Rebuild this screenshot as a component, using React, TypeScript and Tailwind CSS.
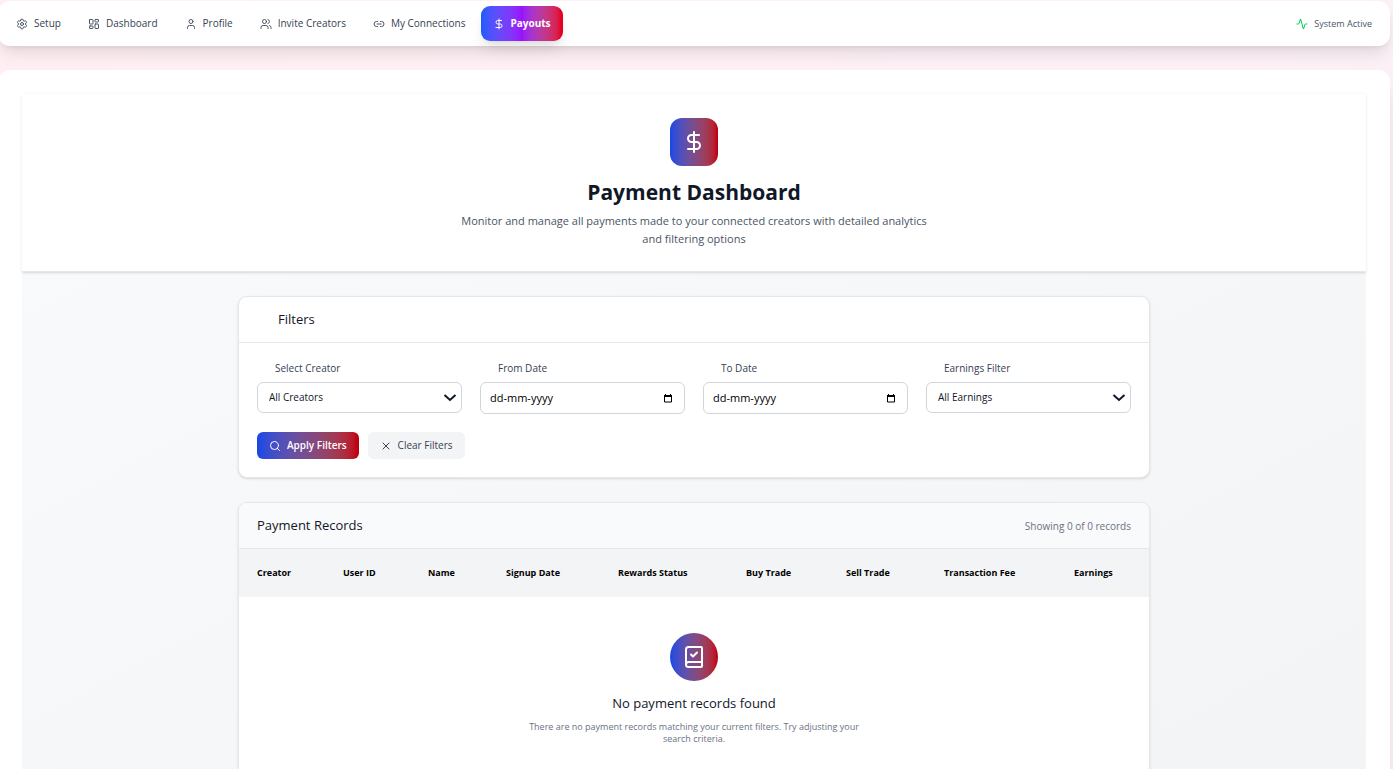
import { useState } from "react";
import {
  Activity,
  BookCheck,
  DollarSign,
  LayoutDashboard,
  Link2,
  Search,
  Settings,
  User,
  Users,
  X,
} from "lucide-react";

const navItems = [
  { label: "Setup", icon: Settings },
  { label: "Dashboard", icon: LayoutDashboard },
  { label: "Profile", icon: User },
  { label: "Invite Creators", icon: Users },
  { label: "My Connections", icon: Link2 },
  { label: "Payouts", icon: DollarSign, active: true },
];

const columns = [
  { label: "Creator", width: "w-[86px]" },
  { label: "User ID", width: "w-[85px]" },
  { label: "Name", width: "w-[78px]" },
  { label: "Signup Date", width: "w-[112px]" },
  { label: "Rewards Status", width: "w-[128px]" },
  { label: "Buy Trade", width: "w-[100px]" },
  { label: "Sell Trade", width: "w-[98px]" },
  { label: "Transaction Fee", width: "w-[130px]" },
  { label: "Earnings", width: "w-[93px]" },
];

/** Top navigation bar */
function NavBar() {
  return (
    <header className="mt-px flex items-center justify-between rounded-xl bg-white py-[5px] pr-[18px] pl-1.5 shadow-lg">
      <nav className="flex items-center gap-[3px]">
        {navItems.map(({ label, icon: Icon, active }) => (
          <a
            key={label}
            href="#"
            className={
              active
                ? "flex h-[35px] items-center gap-1.5 rounded-[9px] bg-gradient-to-r from-blue-600 via-purple-600 to-red-600 px-3 text-[10px] font-bold text-white shadow-lg"
                : "flex h-[35px] items-center gap-1.5 rounded-[9px] px-3 text-[10px] font-medium text-gray-700"
            }
          >
            <Icon size={12} className={active ? "text-white" : "text-gray-600"} />
            {label}
          </a>
        ))}
      </nav>
      <div className="flex items-center gap-1.5 text-[9px] text-gray-600">
        <Activity size={12} className="text-green-500" />
        System Active
      </div>
    </header>
  );
}

type SelectFieldProps = { id: string; label: string; options: string[] };

function SelectField({ id, label, options }: SelectFieldProps) {
  return (
    <div>
      <label
        htmlFor={id}
        className="mb-1.5 block pl-[18px] text-[10px] leading-4 font-medium text-gray-700"
      >
        {label}
      </label>
      <div className="relative">
        <select
          id={id}
          className="h-[31px] w-full appearance-none rounded-md border border-gray-300 bg-white px-[11px] text-[10px] text-gray-900"
        >
          {options.map((option) => (
            <option key={option}>{option}</option>
          ))}
        </select>
        <svg
          viewBox="0 0 14 8"
          className="pointer-events-none absolute top-3 right-[5px] h-2 w-3.5 fill-none stroke-gray-900 stroke-2"
        >
          <path d="M1.5 1 7 6l5.500-5" />
        </svg>
      </div>
    </div>
  );
}

type DateFieldProps = {
  id: string;
  label: string;
  value: string;
  onChange: (value: string) => void;
};

function DateField({ id, label, value, onChange }: DateFieldProps) {
  return (
    <div>
      <label
        htmlFor={id}
        className="mb-1.5 block pl-[18px] text-[10px] leading-4 font-medium text-gray-700"
      >
        {label}
      </label>
      <div className="flex h-8 items-center rounded-md border border-gray-300 bg-white pr-3 pl-[9px]">
        <input
          id={id}
          type="text"
          placeholder="dd-mm-yyyy"
          value={value}
          onChange={(e) => onChange(e.target.value)}
          className="min-w-0 flex-1 text-[11px] text-black outline-none placeholder:text-black"
        />
        <svg viewBox="0 0 8 9" className="h-[9px] w-2">
          <path d="M.5 2.500v5.500h7v-5.500" fill="none" stroke="#000" />
          <path d="M0 1h1V0h1v1h4V0h1v1h1v2H0z" fill="#000" />
        </svg>
      </div>
    </div>
  );
}

/** Filters card */
function Filters() {
  const [fromDate, setFromDate] = useState("");
  const [toDate, setToDate] = useState("");

  const clearFilters = () => {
    setFromDate("");
    setToDate("");
  };

  return (
    <section className="rounded-[9px] border border-gray-200 bg-white shadow-sm">
      <div className="border-b border-gray-200 px-[39px] py-3">
        <h2 className="text-[13px] leading-[21px] font-medium text-gray-900">Filters</h2>
      </div>
      <form className="p-[18px] pt-[17px]" onSubmit={(e) => e.preventDefault()}>
        <div className="grid grid-cols-4 gap-[18px]">
          <SelectField id="creator" label="Select Creator" options={["All Creators"]} />
          <DateField id="from" label="From Date" value={fromDate} onChange={setFromDate} />
          <DateField id="to" label="To Date" value={toDate} onChange={setToDate} />
          <SelectField id="earnings" label="Earnings Filter" options={["All Earnings"]} />
        </div>
        <div className="mt-[18px] flex gap-[9px]">
          <button
            type="submit"
            className="flex h-[27px] items-center gap-1.5 rounded-md bg-gradient-to-r from-blue-700 to-red-700 px-3 text-[10px] font-semibold text-white"
          >
            <Search size={12} />
            Apply Filters
          </button>
          <button
            type="button"
            onClick={clearFilters}
            className="flex h-[27px] items-center gap-1.5 rounded-md bg-gray-100 px-3 text-[10px] font-medium text-gray-700"
          >
            <X size={12} />
            Clear Filters
          </button>
        </div>
      </form>
    </section>
  );
}

function PaymentRecords() {
  return (
    <section className="overflow-hidden rounded-[9px] border border-gray-200 bg-white shadow-sm">
      <div className="flex items-center justify-between border-b border-gray-200 bg-gray-50 px-[18px] py-3">
        <h2 className="text-[13px] leading-[21px] font-medium text-gray-900">Payment Records</h2>
        <span className="text-[10px] leading-4 text-gray-500">Showing 0 of 0 records</span>
      </div>
      <table className="w-full table-fixed">
        <thead className="bg-gray-100">
          <tr className="h-12">
            {columns.map(({ label, width }) => (
              <th
                key={label}
                className={`${width} pl-[18px] text-left text-[9px] font-bold whitespace-nowrap text-black`}
              >
                {label}
              </th>
            ))}
          </tr>
        </thead>
      </table>
      <div className="flex flex-col items-center py-9 text-center">
        <div className="flex size-12 items-center justify-center rounded-full bg-gradient-to-r from-blue-700 to-red-700 text-white">
          <BookCheck size={24} />
        </div>
        <h3 className="mt-3 text-[13px] leading-[21px] font-medium text-gray-900">
          No payment records found
        </h3>
        <p className="mt-[7px] max-w-[336px] text-[9px] leading-3 text-gray-500">
          There are no payment records matching your current filters. Try adjusting your search
          criteria.
        </p>
      </div>
    </section>
  );
}

export default function App() {
  return (
    <div className="min-h-screen overflow-hidden bg-gradient-to-r from-[#ffeff2] to-[#fcf0f7] font-['Open_Sans','Noto_Sans',sans-serif]">
      <div className="mr-[3px] -ml-0.5">
        <NavBar />
        <main className="mt-6 rounded-xl bg-white p-6 shadow-xl">
          <div className="bg-gradient-to-br from-gray-50 to-gray-100">
            {/** Page heading */}
            <div className="flex flex-col items-center border-b border-gray-200 bg-white pt-6 pb-[23px] text-center shadow-sm">
              <div className="flex size-12 items-center justify-center rounded-xl bg-gradient-to-r from-blue-700 to-red-700 text-white">
                <DollarSign size={24} />
              </div>
              <h1 className="mt-3 text-[21px] leading-7 font-bold text-gray-900">
                Payment Dashboard
              </h1>
              <p className="mt-1.5 max-w-[484px] text-[11px] leading-[18px] text-gray-600">
                Monitor and manage all payments made to your connected creators with detailed
                analytics and filtering options
              </p>
            </div>

            <div className="mx-auto flex max-w-[912px] flex-col gap-6 py-6">
              <Filters />
              <PaymentRecords />
            </div>
          </div>
        </main>
      </div>
    </div>
  );
}
